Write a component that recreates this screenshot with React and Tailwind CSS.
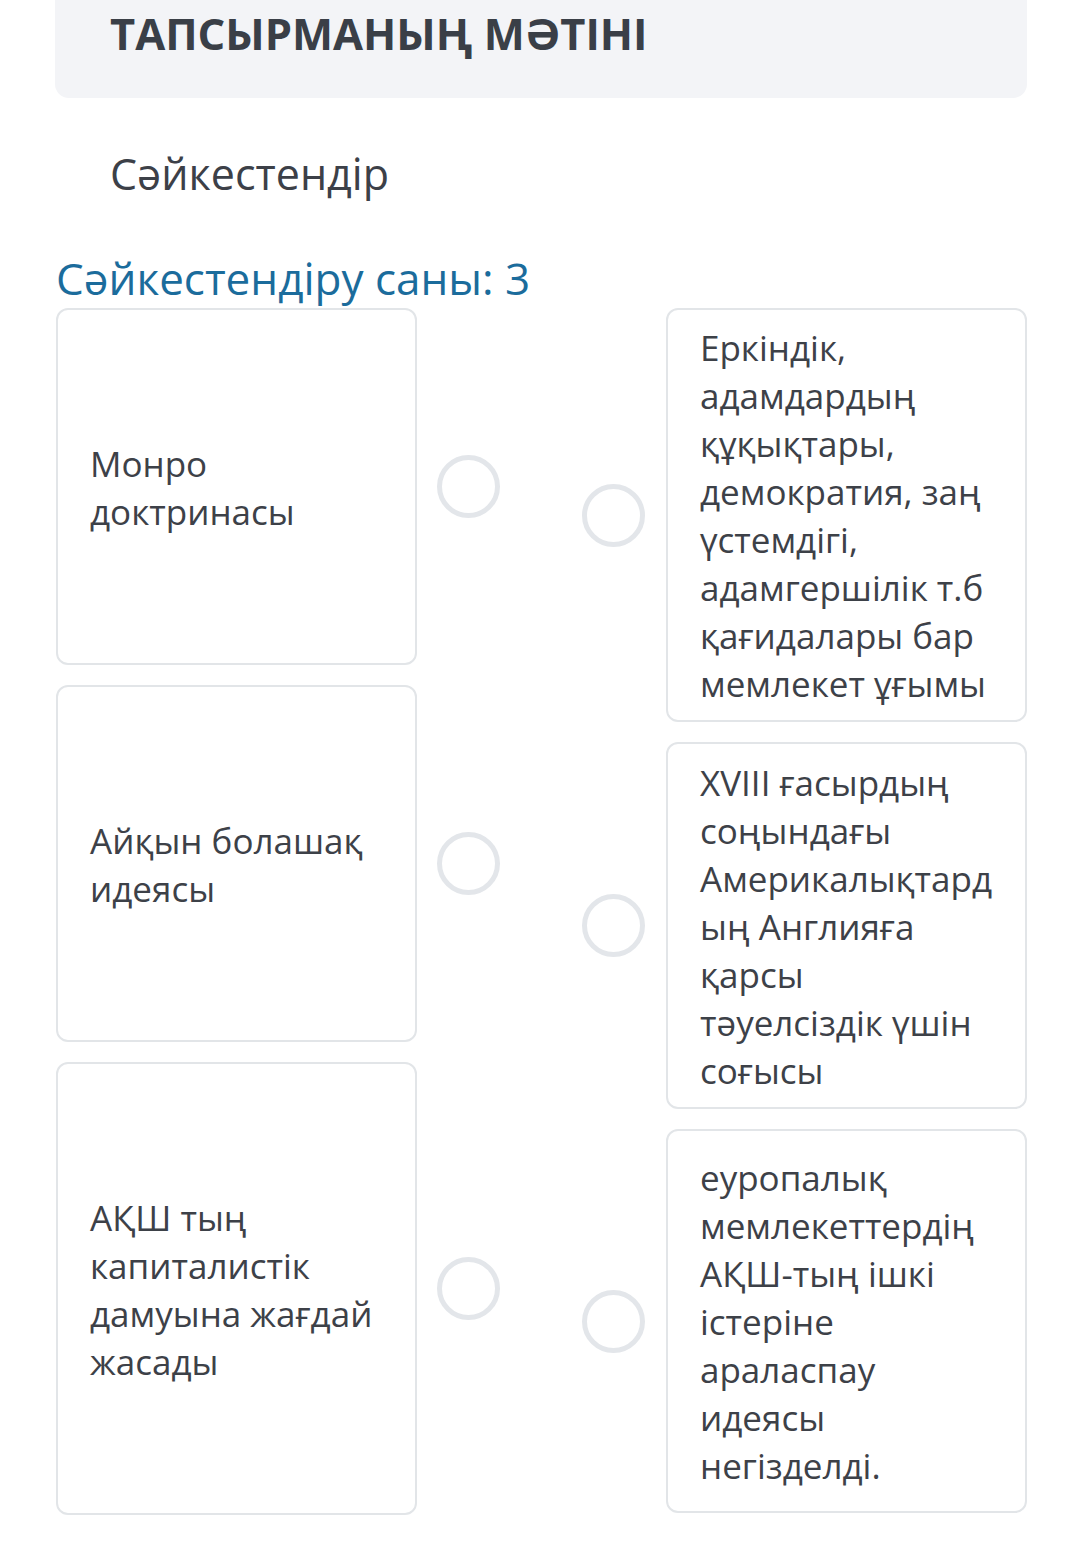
import React from 'react'

const left = [
  { h: 'h-[357px]', lines: ['Монро', 'доктринасы'] },
  { h: 'h-[357px]', lines: ['Айқын болашақ', 'идеясы'] },
  { h: 'h-[453px]', lines: ['АҚШ тың', 'капиталистік', 'дамуына жағдай', 'жасады'] },
]

const right = [
  {
    h: 'h-[414px]',
    lines: ['Еркіндік,', 'адамдардың', 'құқықтары,', 'демократия, заң', 'үстемдігі,', 'адамгершілік т.б', 'қағидалары бар', 'мемлекет ұғымы'],
  },
  {
    h: 'h-[367px]',
    lines: ['XVIII ғасырдың', 'соңындағы', 'Америкалықтард', 'ың Англияға', 'қарсы', 'тәуелсіздік үшін', 'соғысы'],
  },
  {
    h: 'h-[384px]',
    lines: ['еуропалық', 'мемлекеттердің', 'АҚШ-тың ішкі', 'істеріне', 'араласпау', 'идеясы', 'негізделді.'],
  },
]

function Circle() {
  return <div className="w-[63px] h-[63px] rounded-full border-[5px] border-[#e3e6ea] flex-shrink-0" />
}

function Card({ item }) {
  return (
    <div className={`${item.h} w-[361px] rounded-[12px] border-2 border-[#e2e5e8] flex flex-col justify-center px-[32px] pt-[2px] flex-shrink-0`}>
      {item.lines.map((l, i) => (
        <div key={i} className="text-[35px] leading-[48px] text-[#3d4148] whitespace-nowrap">{l}</div>
      ))}
    </div>
  )
}

export default function App() {
  return (
    <div className="w-[1080px] min-h-[1560px] bg-white font-['Open_Sans',sans-serif]">
      <div className="ml-[55px] mr-[53px] h-[98px] bg-[#f3f4f7] rounded-b-[14px] pl-[55px] pt-[4px]">
        <h1 className="text-[43.5px] font-bold text-[#3a3f47] leading-[60px] whitespace-nowrap">
          ТАПСЫРМАНЫҢ МӘТІНІ
        </h1>
      </div>

      <p className="pl-[110px] mt-[46px] text-[43px] leading-[60px] text-[#3c4048] whitespace-nowrap">
        Сәйкестендір
      </p>

      <div className="pl-[56px] mt-[44px] text-[44px] leading-[60px] text-[#1b6c9c] whitespace-nowrap">
        Сәйкестендіру саны: 3
      </div>

      <div className="ml-[56px] mr-[53px] flex justify-between">
        <div className="flex flex-col gap-[20px]">
          {left.map((item, i) => (
            <div key={i} className="flex items-center gap-[20px]">
              <Card item={item} />
              <Circle />
            </div>
          ))}
        </div>
        <div className="flex flex-col gap-[20px]">
          {right.map((item, i) => (
            <div key={i} className="flex items-center gap-[21px]">
              <Circle />
              <Card item={item} />
            </div>
          ))}
        </div>
      </div>
    </div>
  )
}
